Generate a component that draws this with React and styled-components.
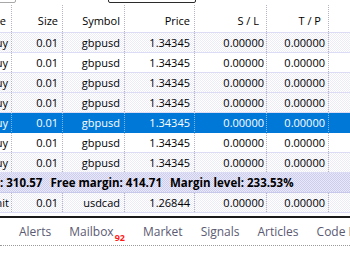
import React from 'react';
import styled, { createGlobalStyle } from 'styled-components';

const GlobalStyle = createGlobalStyle`
  html, body {
    margin: 0;
    padding: 0;
    background: #ffffff;
  }
  body {
    font-family: "Open Sans", "Noto Sans", Arial, sans-serif;
    font-size: 11px;
    color: #000;
    overflow: hidden;
  }
`;

const Window = styled.div`
  width: 350px;
  height: 267px;
  display: flex;
  flex-direction: column;
  overflow: hidden;
  background: #fff;
`;

const TopStrip = styled.div`
  height: 5px;
  display: flex;
  align-items: flex-start;
  overflow: hidden;
`;

const StubBox = styled.div`
  height: 10px;
  margin-top: -7px;
  margin-left: ${p => p.$left}px;
  width: ${p => p.$width}px;
  border: 1px solid ${p => (p.$dark ? '#2b2b2b' : '#a8a8a8')};
  border-radius: 0 0 2px 2px;
  box-sizing: border-box;
`;

const COLS = '12px 51px 62px 70px 72px 62px 1fr';

const Row = styled.div`
  display: grid;
  grid-template-columns: ${COLS};
  height: ${p => p.$h || 20}px;
  box-sizing: border-box;
  border-bottom: 1px solid ${p => (p.$selected ? '#0078d7' : '#dcdcf5')};
  background: ${p =>
    p.$selected
      ? '#0078d7'
      : p.$dotted
      ? 'repeating-conic-gradient(#ececf9 0% 25%, #ffffff 0% 50%) 0 0 / 2px 2px'
      : '#ffffff'};
  color: ${p => (p.$selected ? '#ffffff' : '#000000')};
`;

const Cell = styled.div`
  display: flex;
  align-items: center;
  justify-content: flex-end;
  padding-right: ${p => (p.$pad !== undefined ? p.$pad : 4)}px;
  overflow: hidden;
  white-space: nowrap;
  border-right: 1px dotted ${p => (p.$light ? '#7fb6e8' : '#b4b4c4')};
  &:last-child {
    border-right: none;
  }
`;

const HeaderCell = styled(Cell)`
  padding-top: 4px;
`;

const BalanceRow = styled.div`
  height: 20px;
  box-sizing: border-box;
  border-bottom: 1px solid #c8c8ea;
  background: repeating-conic-gradient(#cdcdee 0% 25%, #e8e8f8 0% 50%) 0 0 / 2px 2px;
  display: flex;
  align-items: center;
  white-space: nowrap;
  font-weight: 700;
  font-size: 11.5px;
  overflow: hidden;
`;

const BalanceItem = styled.span`
  margin-right: 8px;
`;

const Divider = styled.div`
  margin-top: 3px;
  height: 2px;
  background: #1a1a1a;
`;

const TabBar = styled.div`
  height: 27px;
  display: flex;
  align-items: center;
  white-space: nowrap;
  overflow: hidden;
  border-bottom: 1px dotted #9a9a9a;
  color: #5a5a72;
  font-size: 12px;
`;

const Sep = styled.span`
  display: inline-block;
  width: 1px;
  height: 13px;
  background: #555;
  margin: 0 ${p => p.$r}px 0 ${p => p.$l}px;
`;

const Tab = styled.span`
  display: inline-flex;
  align-items: flex-end;
`;

const Badge = styled.sup`
  color: #ff1a1a;
  font-size: 9px;
  font-weight: 700;
  vertical-align: baseline;
  position: relative;
  top: 4px;
  margin-left: 1px;
`;

const rows = [
  { dotted: true },
  { dotted: false },
  { dotted: true },
  { dotted: true },
  { selected: true },
  { dotted: false },
  { dotted: true },
];

export default function App() {
  return (
    <Window>
      <GlobalStyle />
      <TopStrip>
        <StubBox $left={-4} $width={20} />
        <StubBox $left={92} $width={88} $dark />
      </TopStrip>
      <Row $h={28}>
        <HeaderCell $pad={5}>Type</HeaderCell>
        <HeaderCell>Size</HeaderCell>
        <HeaderCell>Symbol</HeaderCell>
        <HeaderCell>Price</HeaderCell>
        <HeaderCell $pad={7}>S / L</HeaderCell>
        <HeaderCell $pad={7}>T / P</HeaderCell>
        <HeaderCell />
      </Row>
      {rows.map((r, i) => (
        <Row key={i} $dotted={r.dotted} $selected={r.selected}>
          <Cell $pad={3} $light={r.selected}>buy</Cell>
          <Cell $light={r.selected}>0.01</Cell>
          <Cell $light={r.selected}>gbpusd</Cell>
          <Cell $light={r.selected}>1.34345</Cell>
          <Cell $pad={2} $light={r.selected}>0.00000</Cell>
          <Cell $pad={3} $light={r.selected}>0.00000</Cell>
          <Cell />
        </Row>
      ))}
      <BalanceRow>
        <BalanceItem>: 310.57</BalanceItem>
        <BalanceItem>Free margin: 414.71</BalanceItem>
        <BalanceItem>Margin level: 233.53%</BalanceItem>
      </BalanceRow>
      <Row $dotted>
        <Cell $pad={2}>buy limit</Cell>
        <Cell>0.01</Cell>
        <Cell>usdcad</Cell>
        <Cell>1.26844</Cell>
        <Cell $pad={2}>0.00000</Cell>
        <Cell $pad={3}>0.00000</Cell>
        <Cell />
      </Row>
      <Divider />
      <TabBar>
        <Sep $l={11} $r={8} />
        <Tab>Alerts</Tab>
        <Sep $l={10} $r={8} />
        <Tab>
          Mailbox<Badge>92</Badge>
        </Tab>
        <Sep $l={10} $r={8} />
        <Tab>Market</Tab>
        <Sep $l={10} $r={8} />
        <Tab>Signals</Tab>
        <Sep $l={10} $r={8} />
        <Tab>Articles</Tab>
        <Sep $l={10} $r={8} />
        <Tab>Code Base</Tab>
      </TabBar>
    </Window>
  );
}
